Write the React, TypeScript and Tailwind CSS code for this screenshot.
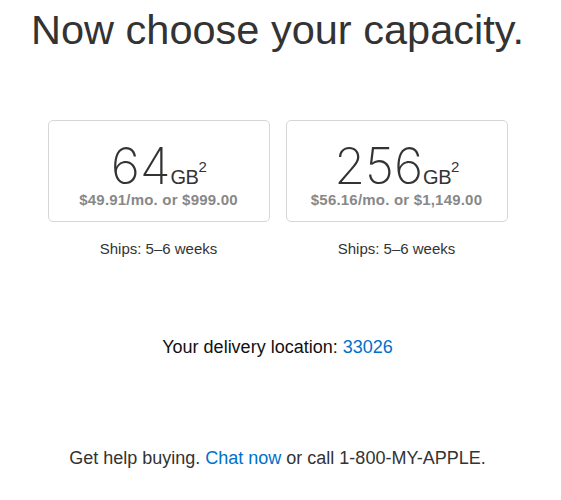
import React from 'react';

type Option = {
  size: string;
  price: string;
};

const options: Option[] = [
  { size: '64', price: '$49.91/mo. or $999.00' },
  { size: '256', price: '$56.16/mo. or $1,149.00' },
];

function CapacityCard({ size, price }: Option) {
  return (
    <div className="flex w-[222px] flex-col items-center">
      <button className="h-[102px] w-full rounded-[5px] border border-[#d6d6d6] bg-white pt-[11px] text-center">
        <div className="text-[50px] leading-[44px] font-extralight text-[#333] [font-family:Inter,'Liberation_Sans',sans-serif]">
          {size}
          <span className="text-[20px] leading-none font-normal tracking-[-0.5px] [font-family:'Liberation_Sans',Arial,sans-serif]">
            GB
            <sup className="top-[-12px] text-[15px]">2</sup>
          </span>
        </div>
        <div className="mt-[3px] text-[15px] leading-[18px] font-semibold tracking-[0.2px] text-[#888]">{price}</div>
      </button>
      <p className="mt-[17px] text-[15px] leading-[20px] text-[#333]">Ships: 5–6 weeks</p>
    </div>
  );
}

export default function App() {
  return (
    <div className="min-h-[500px] bg-white [font-family:'Liberation_Sans',Arial,sans-serif]">
      <div className="w-[555px] text-center">
        {/* Heading */}
        <h1 className="pt-[6px] text-[41.5px] leading-[48px] text-[#333]">Now choose your capacity.</h1>

        {/* Capacity options */}
        <div className="mt-[66px] flex justify-center gap-[16px]">
          {options.map((o) => (
            <CapacityCard key={o.size} {...o} />
          ))}
        </div>

        {/* Delivery */}
        <p className="mt-[76px] text-[18px] leading-[24px] text-[#111]">
          Your delivery location: <a className="text-[#0070c9]">33026</a>
        </p>

        {/* Help */}
        <p className="mt-[87px] text-[18px] leading-[24px] text-[#333]">
          Get help buying. <a className="text-[#0070c9]">Chat now</a> or call 1-800-MY-APPLE.
        </p>
      </div>
    </div>
  );
}
